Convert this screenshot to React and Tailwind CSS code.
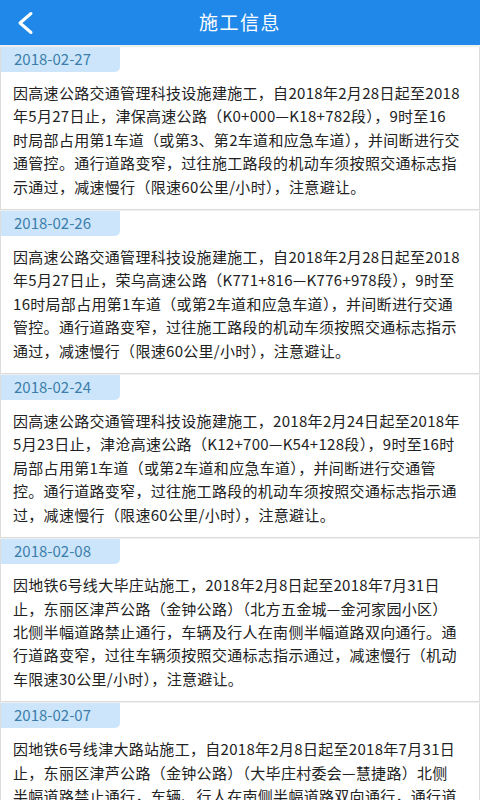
const notices = [
    {
        date: '2018-02-27',
        lines: [
            '因高速公路交通管理科技设施建施工，自2018年2月28日起至2018',
            '年5月27日止，津保高速公路（K0+000—K18+782段），9时至16',
            '时局部占用第1车道（或第3、第2车道和应急车道），并间断进行交',
            '通管控。通行道路变窄，过往施工路段的机动车须按照交通标志指',
            '示通过，减速慢行（限速60公里/小时），注意避让。',
        ],
    },
    {
        date: '2018-02-26',
        lines: [
            '因高速公路交通管理科技设施建施工，自2018年2月28日起至2018',
            '年5月27日止，荣乌高速公路（K771+816—K776+978段），9时至',
            '16时局部占用第1车道（或第2车道和应急车道），并间断进行交通',
            '管控。通行道路变窄，过往施工路段的机动车须按照交通标志指示',
            '通过，减速慢行（限速60公里/小时），注意避让。',
        ],
    },
    {
        date: '2018-02-24',
        lines: [
            '因高速公路交通管理科技设施建施工，2018年2月24日起至2018年',
            '5月23日止，津沧高速公路（K12+700—K54+128段），9时至16时',
            '局部占用第1车道（或第2车道和应急车道），并间断进行交通管',
            '控。通行道路变窄，过往施工路段的机动车须按照交通标志指示通',
            '过，减速慢行（限速60公里/小时），注意避让。',
        ],
    },
    {
        date: '2018-02-08',
        lines: [
            '因地铁6号线大毕庄站施工，2018年2月8日起至2018年7月31日',
            '止，东丽区津芦公路（金钟公路）（北方五金城—金河家园小区）',
            '北侧半幅道路禁止通行，车辆及行人在南侧半幅道路双向通行。通',
            '行道路变窄，过往车辆须按照交通标志指示通过，减速慢行（机动',
            '车限速30公里/小时），注意避让。',
        ],
    },
    {
        date: '2018-02-07',
        lines: [
            '因地铁6号线津大路站施工，自2018年2月8日起至2018年7月31日',
            '止，东丽区津芦公路（金钟公路）（大毕庄村委会—慧捷路）北侧',
            '半幅道路禁止通行，车辆、行人在南侧半幅道路双向通行，通行道',
            '路变窄，过往车辆须按照交通标志指示通过，减速慢行（机动车限',
            '速30公里/小时），注意避让。',
        ],
    },
];

const App = () => {
    return (
        <div
            className="w-[480px] h-[800px] overflow-hidden bg-[#efefef] flex flex-col"
            style={{ fontFamily: '"Noto Sans CJK SC", "Noto Sans", sans-serif' }}
        >
            {/* Top bar */}
            <header className="relative h-[45px] shrink-0 bg-[#2088e8] flex items-center justify-center">
                <button className="absolute left-[16px] top-[11px] text-white">
                    <svg width="20" height="24" viewBox="0 0 20 24" fill="none">
                        <polyline points="15,2.5 4,12 15,21.5" stroke="white" strokeWidth="3" strokeLinecap="round" strokeLinejoin="round" />
                    </svg>
                </button>
                <h1 className="text-white text-[19px] tracking-[1.5px]">施工信息</h1>
            </header>

            {/* Notice list */}
            <div className="flex flex-col gap-px pt-[2px]">
                {notices.map((n) => (
                    <div key={n.date} className="bg-white border-x border-b border-[#dcdcdc] shrink-0">
                        <div className="w-[119px] h-[25px] bg-[#cde5fa] rounded-br-[5px] flex items-center pl-[13px] text-[15px] text-[#3b7eab]">
                            {n.date}
                        </div>
                        <div className="pl-[12px] pr-[10px] pt-[9px] pb-[11px] text-[15px] leading-[23.4px] tracking-[0.3px] text-[#222222]">
                            {n.lines.map((l, i) => (
                                <p key={i} className="whitespace-nowrap">{l}</p>
                            ))}
                        </div>
                    </div>
                ))}
            </div>
        </div>
    );
};

export default App;
